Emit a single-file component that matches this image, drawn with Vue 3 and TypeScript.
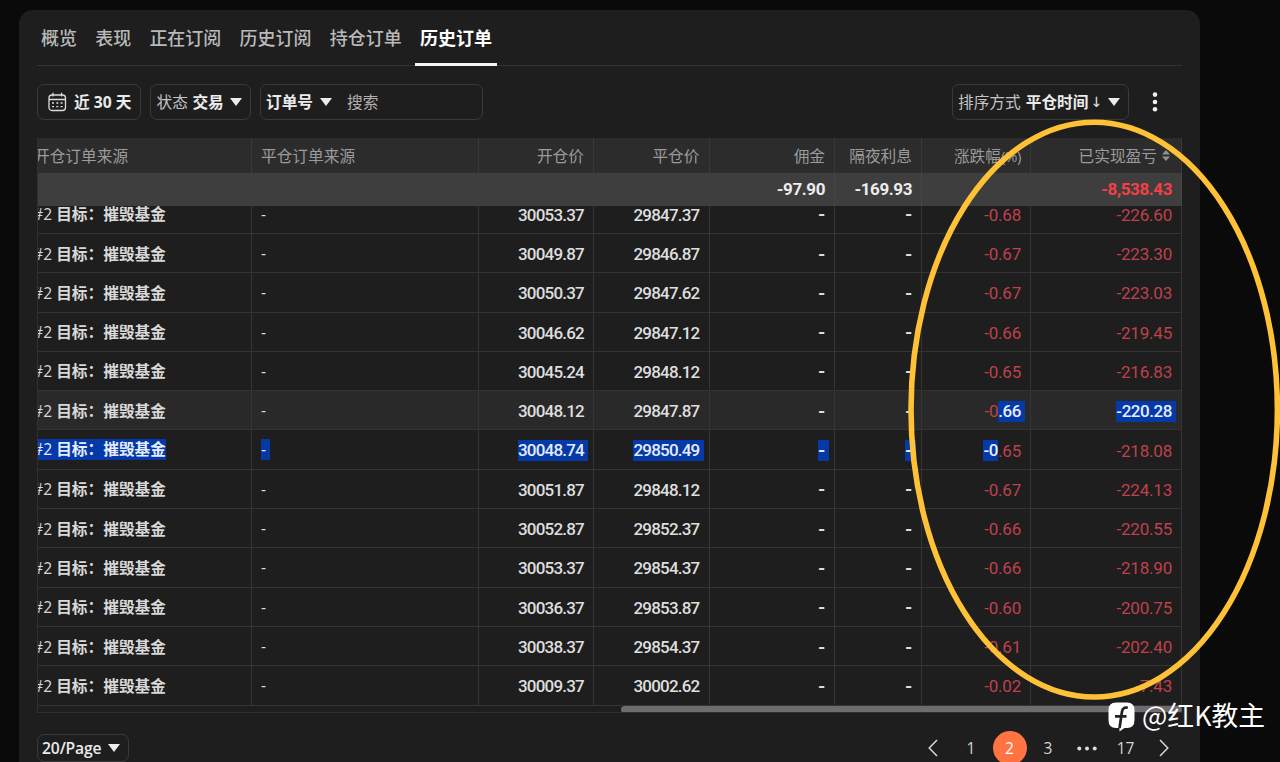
<script setup lang="ts">
interface Part { t: string; sel?: boolean }
interface Row {
  open: string
  close: string
  pct: Part[]
  pnl: string
  hover?: boolean
  selected?: boolean
  pnlSelected?: boolean
}

const tabs: string[] = ['概览', '表现', '正在订阅', '历史订阅', '持仓订单', '历史订单']

const make = (open: string, close: string, pct: string, pnl: string): Row => ({ open, close, pct: [{ t: pct }], pnl })

const rows: Row[] = [
  make('30053.37', '29847.37', '-0.68', '-226.60'),
  make('30049.87', '29846.87', '-0.67', '-223.30'),
  make('30050.37', '29847.62', '-0.67', '-223.03'),
  make('30046.62', '29847.12', '-0.66', '-219.45'),
  make('30045.24', '29848.12', '-0.65', '-216.83'),
  { open: '30048.12', close: '29847.87', pct: [{ t: '-0' }, { t: '.66', sel: true }], pnl: '-220.28', hover: true, pnlSelected: true },
  { open: '30048.74', close: '29850.49', pct: [{ t: '-0', sel: true }, { t: '.65' }], pnl: '-218.08', selected: true },
  make('30051.87', '29848.12', '-0.67', '-224.13'),
  make('30052.87', '29852.37', '-0.66', '-220.55'),
  make('30053.37', '29854.37', '-0.66', '-218.90'),
  make('30036.37', '29853.87', '-0.60', '-200.75'),
  make('30038.37', '29854.37', '-0.61', '-202.40'),
  make('30009.37', '30002.62', '-0.02', '-7.43'),
]
</script>

<template>
  <div class="page">
    <main class="panel">
      <nav class="tabs">
        <div v-for="(t, i) in tabs" :key="t" class="tab" :class="{ active: i === 5 }">{{ t }}</div>
      </nav>

      <div class="filters">
        <button class="box date">
          <svg width="19" height="20" viewBox="0 0 19 20" fill="none" stroke="#dcdcdc" stroke-width="1.3">
            <rect x="1" y="3" width="16.5" height="15.5" rx="3" />
            <path d="M1 7.5H17.5M5 .8V4.5M13.5 .8V4.5" />
            <path d="M4 11H6M8.3 11H10.3M12.6 11H14.6M4 14.6H6M8.3 14.6H10.3M12.6 14.6H14.6" />
          </svg>
          <b>近 30 天</b>
        </button>
        <button class="box status"><span>状态</span><b>交易</b><i class="caret"></i></button>
        <div class="box search"><b>订单号</b><i class="caret"></i><span class="hint">搜索</span></div>
        <button class="box sort"><span>排序方式</span><b>平仓时间</b><span class="down">↓</span><i class="caret"></i></button>
        <svg class="more" width="6" height="20" viewBox="0 0 6 20" fill="#efefef">
          <circle cx="3" cy="2.6" r="2.3" /><circle cx="3" cy="10" r="2.3" /><circle cx="3" cy="17.2" r="2.3" />
        </svg>
      </div>

      <section class="table">
        <div class="row head">
          <div class="cell src"><span>开仓订单来源</span></div>
          <div class="cell">平仓订单来源</div>
          <div class="cell r">开仓价</div>
          <div class="cell r">平仓价</div>
          <div class="cell r">佣金</div>
          <div class="cell r">隔夜利息</div>
          <div class="cell r">涨跌幅<span class="pc">(%)</span></div>
          <div class="cell r last"><span>已实现盈亏</span>
            <svg class="sorter" width="8" height="11" viewBox="0 0 8 11" fill="#929292"><path d="M4 0L8 4.4H0zM4 11L0 6.6H8z" /></svg>
          </div>
        </div>
        <div class="row sum">
          <div class="cell nb"></div><div class="cell nb"></div><div class="cell nb"></div><div class="cell nb"></div>
          <div class="cell r num">-97.90</div>
          <div class="cell r num">-169.93</div>
          <div class="cell nb"></div>
          <div class="cell r num loss">-8,538.43</div>
        </div>
        <div class="body">
          <div v-for="(r, i) in rows" :key="i" class="row data" :class="{ hover: r.hover, selected: r.selected }">
            <div class="cell src"><span class="mark"><span class="tag">#2 </span>目标：摧毁基金</span></div>
            <div class="cell thin"><span class="mark pad">-</span></div>
            <div class="cell r num"><span class="mark pad">{{ r.open }}</span></div>
            <div class="cell r num"><span class="mark pad">{{ r.close }}</span></div>
            <div class="cell r num"><span class="mark pad dash">-</span></div>
            <div class="cell r num"><span class="mark pad dash">-</span></div>
            <div class="cell r num red"><span v-for="(p, k) in r.pct" :key="k" :class="{ sel: p.sel, pad: p.sel && k === 1 }">{{ p.t }}</span></div>
            <div class="cell r num red"><span :class="{ sel: r.pnlSelected, pad: r.pnlSelected }">{{ r.pnl }}</span></div>
          </div>
        </div>
        <div class="scroll"><div class="thumb"></div></div>
      </section>

      <footer class="foot">
        <button class="box size"><b>20/Page</b><i class="caret"></i></button>
        <div class="pager">
          <svg width="10" height="18" viewBox="0 0 10 18" fill="none" stroke="#d8d8d8" stroke-width="1.5"><path d="M9 1L1.2 9L9 17" /></svg>
          <span class="pg first">1</span>
          <span class="pg cur">2</span>
          <span class="pg">3</span>
          <svg class="dots" width="20" height="5" viewBox="0 0 20 5" fill="#dcdcdc"><circle cx="2.3" cy="2.5" r="2" /><circle cx="10" cy="2.5" r="2" /><circle cx="17.7" cy="2.5" r="2" /></svg>
          <span class="pg end">17</span>
          <svg width="10" height="18" viewBox="0 0 10 18" fill="none" stroke="#d8d8d8" stroke-width="1.5"><path d="M1 1L8.8 9L1 17" /></svg>
        </div>
      </footer>
    </main>

    <svg class="ring" width="1280" height="762" viewBox="0 0 1280 762" fill="none">
      <ellipse cx="1094.2" cy="409.6" rx="183.2" ry="287.4" stroke="#ffc236" stroke-width="5.6" />
    </svg>

    <div class="credit">
      <svg width="27" height="30" viewBox="0 0 27 30">
        <path fill="#fff" d="M8 .5H19Q26.5 .5 26.5 8V18Q26.5 26 19 26H16.5L11.5 29.5V26H8Q.5 26 .5 18V8Q.5 .5 8 .5Z" />
        <path fill="none" stroke="#222" stroke-width="2.7" d="M19.8 5.8Q14.8 4.5 14 9.5L11.5 26M7 14.4H18.5" />
      </svg>
      <span>@红K教主</span>
    </div>
  </div>
</template>

<style>
body { margin: 0; background: #0a0a0a; overflow: hidden; }
</style>

<style scoped>
* { box-sizing: border-box; }
.page {
  position: relative;
  width: 1280px;
  height: 762px;
  overflow: hidden;
  background: #0a0a0a;
  color: #dedede;
  font: 15.7px "Open Sans", "Noto Sans CJK SC", sans-serif;
}
.panel {
  width: 1181px;
  height: 780px;
  margin: 10px 0 0 19px;
  padding: 0 18px;
  border-radius: 14px;
  background: #1e1e1e;
}
.tabs { display: flex; height: 56px; border-bottom: 1px solid #333; padding-left: 4px; gap: 18.2px; }
.tab { height: 56px; line-height: 57px; font-size: 18px; color: #b9b9b9; white-space: nowrap; font-weight: 500; }
.tab.active { color: #fff; font-weight: 700; border-bottom: 3px solid #f5f5f5; padding: 0 5px; margin: 0 -5px; }
.filters { display: flex; align-items: center; margin-top: 18px; height: 35px; }
.box {
  display: flex;
  align-items: center;
  flex: none;
  height: 36px;
  padding: 0;
  border: 1.5px solid #3a3a3a;
  border-radius: 7px;
  background: transparent;
  color: #c4c4c4;
  font: inherit;
  white-space: nowrap;
}
.box b { color: #ebebeb; font-weight: 700; }
.caret { width: 0; height: 0; border: 6px solid transparent; border-top: 8px solid #ededed; border-bottom: 0; flex: none; }
.date { width: 104px; padding-left: 10px; gap: 7px; }
.status { width: 101px; margin-left: 9px; padding-left: 5.5px; gap: 4.5px; }
.status .caret { margin-left: 1.5px; }
.search { width: 223px; margin-left: 9px; padding-left: 5px; }
.search .caret { margin-left: 7px; }
.hint { margin-left: 15px; color: #b0b0b0; }
.sort { width: 177px; margin-left: auto; padding-left: 5px; }
.sort b { margin-left: 5px; }
.down { width: 16px; text-align: center; font: 14px "DejaVu Sans", sans-serif; color: #e6e6e6; }
.sort .caret { margin-left: 3px; }
.more { margin: 0 24px 0 23px; }

.table { margin-top: 19px; height: 575px; border: 1px solid #303030; border-top: 0; border-right: 0; overflow: hidden; width: 1145px; margin-left: -0.5px; }
.row { display: grid; grid-template-columns: 214.5px 227px 115px 115.5px 125.5px 87px 109px 151px; }
.cell { display: flex; align-items: center; padding: 0 9px; border-right: 1px solid #353535; white-space: pre; overflow: hidden; }
.r { justify-content: flex-end; }
.src { padding-left: 0; }
.src > span { margin-left: -4.5px; }
.head { height: 35px; background: #2c2c2c; color: #9b9b9b; }
.head .cell { border-right-color: #393939; }
.head .src > span { margin-left: -3.5px; }
.pc { letter-spacing: -0.4px; font-size: 15px; }
.head .last { padding-right: 11px; white-space: nowrap; }
.sorter { margin-left: 5px; }
.sum { height: 33px; background: #3e3e3e; color: #ececec; }
.sum .cell { border-right-color: #454545; }
.sum .nb { border-right-color: transparent; }
.sum .num { font-weight: 700; }
.sum .loss { color: #f43f48; }
.num { font-family: Roboto, sans-serif; font-size: 17px; font-weight: 500; letter-spacing: -0.78px; }
.sum .num { letter-spacing: -0.4px; padding-bottom: 1px; }
.body { height: 499.5px; overflow: hidden; display: flex; flex-direction: column; justify-content: flex-end; }
.data { flex: none; height: 39.3px; border-bottom: 1px solid #333; }
.data .src { font-weight: 700; color: #d8d8d8; }
.data .num { padding-top: 2px; }
.tag { font-weight: 400; }
.dash { display: inline-block; letter-spacing: 0; font-size: 20px; line-height: 21px; }
.hover { background: #292929; }
.data .red { color: #bf414c; font-weight: 400; letter-spacing: -0.2px; }
.sel, .selected .mark { background: #0639a8; color: #e4edff; line-height: 21px; }
.sel { font-weight: 500; letter-spacing: -0.45px; }
.sel.pad, .selected .pad { padding-right: 4px; margin-right: -4px; }
.scroll { height: 7px; display: flex; justify-content: flex-end; }
.thumb { width: 561px; height: 7px; border-radius: 4px; background: #6d6d6d; }

.foot { display: flex; align-items: flex-start; justify-content: space-between; padding-top: 21px; }
.size { width: 92px; height: 28px; padding-left: 4px; }
.size b { font-weight: 600; letter-spacing: -0.15px; }
.size .caret { margin-left: 6px; }
.pager { display: flex; align-items: center; height: 34px; margin-top: -3px; margin-right: 13.5px; }
.pg { width: 34px; height: 34px; line-height: 35px; text-align: center; font-size: 15.5px; color: #d5d5d5; }
.first { margin-left: 16px; }
.end { margin-right: 16px; }
.cur { margin: 0 4.5px; border-radius: 50%; background: #ff7442; color: #fff; }
.dots { margin: 0 12px 0 11.5px; }
.ring { position: absolute; left: 0; top: 0; }
.credit {
  position: absolute;
  left: 1108px;
  top: 702px;
  display: flex;
  align-items: center;
  gap: 7px;
  color: #fff;
  font: 26.8px/30px "Noto Sans CJK SC", sans-serif;
  white-space: nowrap;
}
.credit span { margin-top: -5px; }
</style>
